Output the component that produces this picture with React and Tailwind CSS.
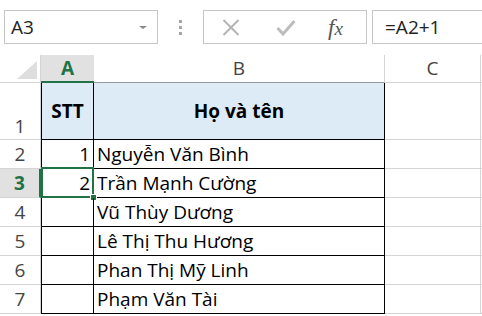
const ROWS = [
  { n: 2, stt: '1', name: 'Nguyễn Văn Bình' },
  { n: 3, stt: '2', name: 'Trần Mạnh Cường', active: true },
  { n: 4, stt: '', name: 'Vũ Thùy Dương' },
  { n: 5, stt: '', name: 'Lê Thị Thu Hương' },
  { n: 6, stt: '', name: 'Phan Thị Mỹ Linh' },
  { n: 7, stt: '', name: 'Phạm Văn Tài' },
]

function FormulaBar() {
  return (
    <div className="flex items-center pt-[10px] h-[44px]">
      {/* Name box */}
      <div className="ml-[4px] w-[154px] h-[34px] border border-[#c6c6c6] flex items-center justify-between pl-[6px] pr-[10px]">
        <span className="text-[19px] text-[#222]">A3</span>
        <span className="w-0 h-0 border-l-[4px] border-r-[4px] border-t-[3px] border-l-transparent border-r-transparent border-t-[#8a8a8a]" />
      </div>
      {/* grip dots */}
      <div className="w-[45px] flex flex-col items-center gap-[3px]">
        <span className="w-[3px] h-[3px] bg-[#a6a6a6]" />
        <span className="w-[3px] h-[3px] bg-[#a6a6a6]" />
        <span className="w-[3px] h-[3px] bg-[#a6a6a6]" />
      </div>
      {/* cancel / enter / fx */}
      <div className="w-[164px] h-[34px] border border-[#c6c6c6] flex items-center">
        <svg className="ml-[18px]" width="18" height="17" viewBox="0 0 18 17">
          <path d="M1.5 1 L16.5 16 M16.5 1 L1.5 16" stroke="#b4b4b4" strokeWidth="2" />
        </svg>
        <svg className="ml-[36px]" width="20" height="17" viewBox="0 0 20 17">
          <path d="M1.5 9 L7 15 L18.5 2" stroke="#bdbdbd" strokeWidth="3" fill="none" />
        </svg>
        <span className="ml-[32px] text-[23px] italic text-[#555] leading-none" style={{ fontFamily: '"Liberation Serif", serif' }}>
          f<span className="text-[19px]">x</span>
        </span>
      </div>
      {/* formula text */}
      <div className="ml-[5px] flex-1 h-[34px] border-y border-l border-[#c6c6c6] flex items-center pl-[12px]">
        <span className="text-[19px] text-[#222]">=A2+1</span>
      </div>
    </div>
  )
}

function ColumnHeaders() {
  return (
    <div className="flex h-[28px]">
      <div className="w-[41px] h-full border-r border-b border-[#d4d4d4] relative">
        <svg className="absolute right-[3px] bottom-[3px]" width="20" height="18" viewBox="0 0 20 18">
          <path d="M20 0 L20 18 L0 18 Z" fill="#dedede" />
        </svg>
      </div>
      <div className="w-[53px] h-full bg-[#e1e1e1] border-b-2 border-[#217346] flex items-center justify-center">
        <span className="text-[19px] font-bold text-[#217346]">A</span>
      </div>
      <div className="w-[291px] h-full border-r border-b border-r-[#d4d4d4] border-b-[#9b9b9b] flex items-center justify-center">
        <span className="text-[19px] text-[#444]">B</span>
      </div>
      <div className="w-[96px] h-full border-r border-b border-[#d4d4d4] flex items-center justify-center">
        <span className="text-[19px] text-[#444]">C</span>
      </div>
      <div className="flex-1 h-full border-b border-[#d4d4d4]" />
    </div>
  )
}

function RowHeader({ n, active, bottom }) {
  return (
    <div
      className={
        'w-[41px] h-full border-r border-b border-[#d4d4d4] flex justify-center ' +
        (bottom ? 'items-end ' : 'items-center ') +
        (active ? 'bg-[#e1e1e1] border-r-[#217346] border-r-2' : '')
      }
    >
      <span className={'text-[19px] leading-[26px] ' + (active ? 'font-bold text-[#217346]' : 'text-[#444]')}>{n}</span>
    </div>
  )
}

export default function App() {
  return (
    <div className="w-[482px] h-[316px] bg-white overflow-hidden" style={{ fontFamily: '"Open Sans", sans-serif' }}>
      <FormulaBar />
      <div className="mt-[11px]">
        <ColumnHeaders />

        {/* Row 1: table header */}
        <div className="flex h-[57px]">
          <RowHeader n={1} bottom />
          <div className="w-[53px] h-full bg-[#ddebf7] border-l border-r border-b border-black flex items-center justify-center">
            <span className="text-[19px] font-bold text-black">STT</span>
          </div>
          <div className="w-[291px] h-full bg-[#ddebf7] border-r border-b border-black flex items-center justify-center">
            <span className="text-[19px] font-bold text-black">Họ và tên</span>
          </div>
          <div className="w-[96px] h-full border-r border-b border-[#d4d4d4]" />
          <div className="flex-1 h-full border-b border-[#d4d4d4]" />
        </div>

        {ROWS.map((r) => (
          <div key={r.n} className="flex h-[29px]">
            <RowHeader n={r.n} active={r.active} />
            <div className="w-[53px] h-full border-l border-r border-b border-black flex items-center justify-end pr-[3px] relative">
              <span className="text-[19px] text-black">{r.stt}</span>
              {r.active && (
                <>
                  <div className="absolute -left-[1px] -top-[2px] w-[53px] h-[31px] border-2 border-[#217346]" />
                  <div className="absolute -right-[4px] -bottom-[4px] w-[7px] h-[7px] bg-[#217346] border border-white" />
                </>
              )}
            </div>
            <div className="w-[291px] h-full border-r border-b border-black flex items-center pl-[3px]">
              <span className="text-[19px] text-black whitespace-nowrap">{r.name}</span>
            </div>
            <div className="w-[96px] h-full border-r border-b border-[#d4d4d4]" />
            <div className="flex-1 h-full border-b border-[#d4d4d4]" />
          </div>
        ))}
      </div>
    </div>
  )
}
